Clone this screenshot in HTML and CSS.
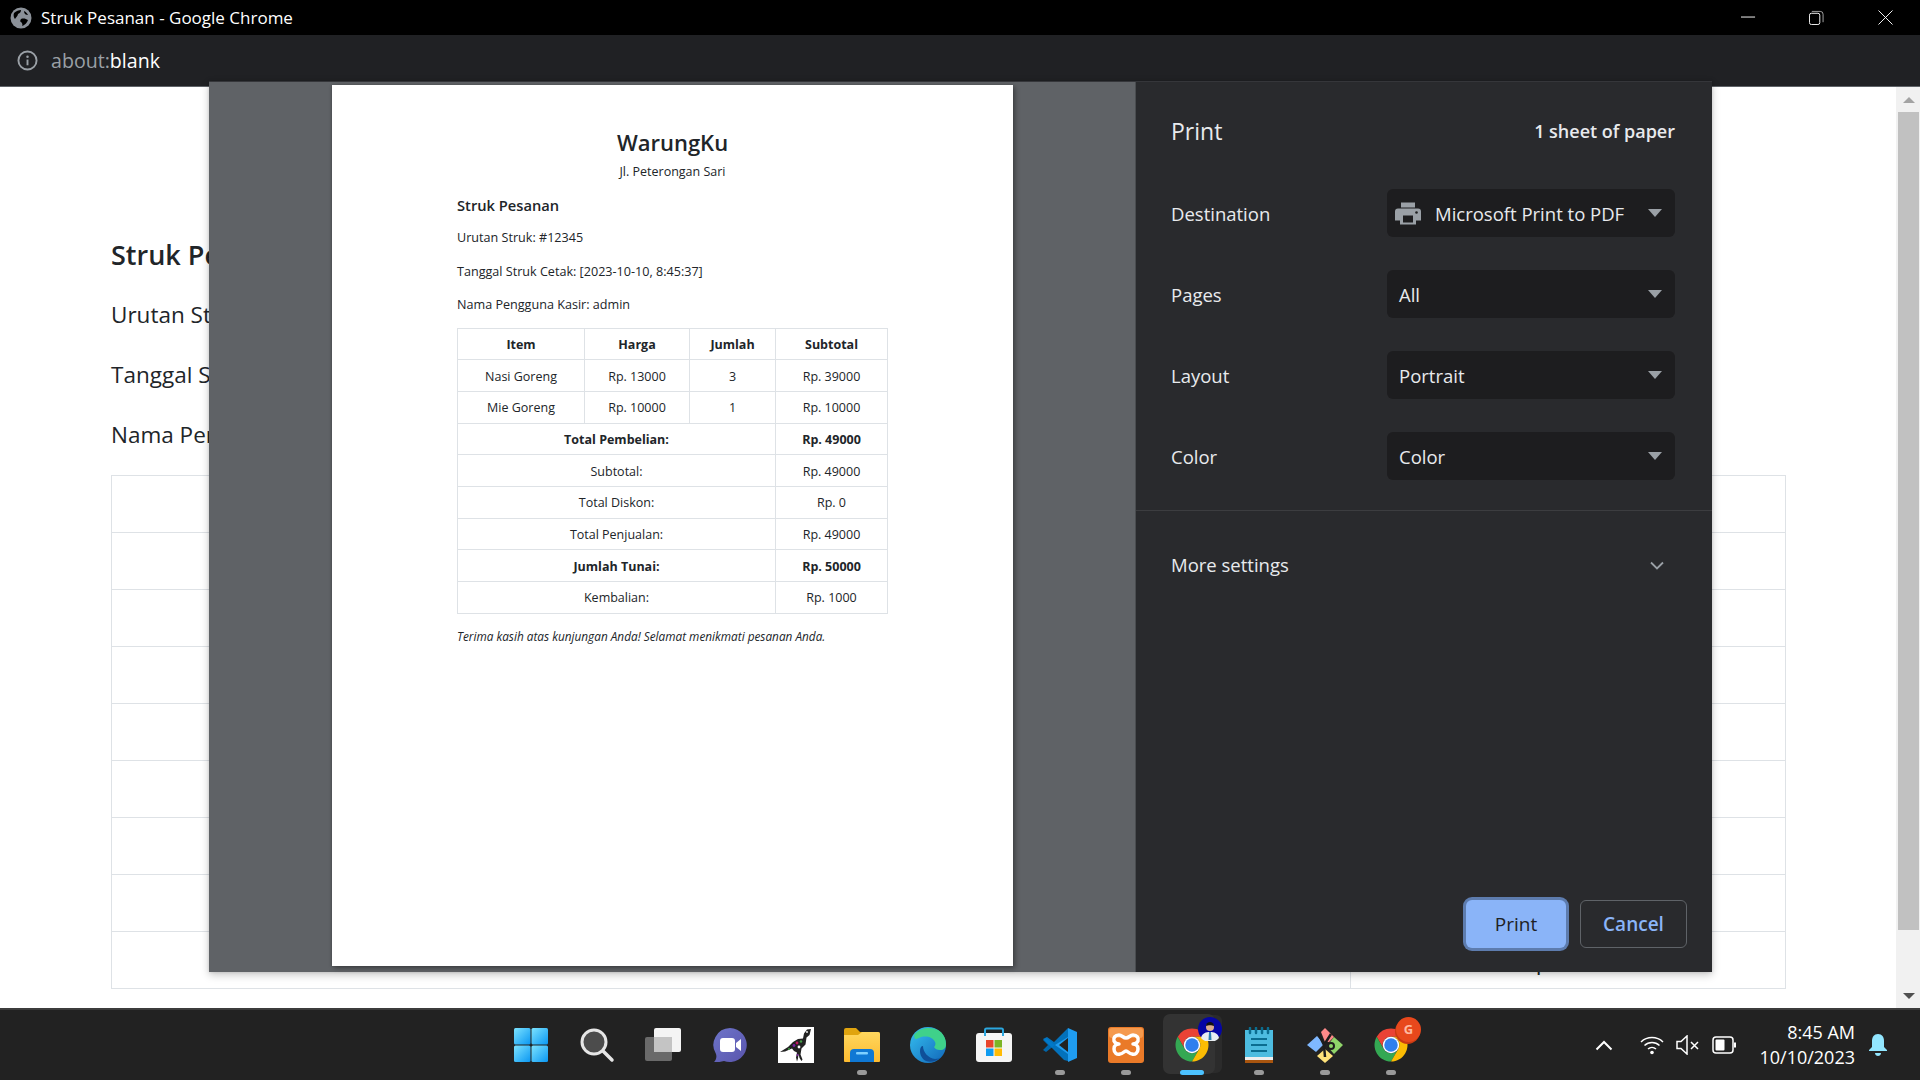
FILE: index.html
```html
<!DOCTYPE html>
<html lang="id">
<head>
<meta charset="utf-8">
<title>Struk Pesanan - Google Chrome</title>
<link rel="stylesheet" href="styles.css">
</head>
<body>
<svg class="defs" width="0" height="0" aria-hidden="true">
  <defs>
    <symbol id="chrome" viewBox="0 0 48 48">
      <path fill="#ea4335" d="M24 2A22 22 0 0 1 43.05 13H24a11 11 0 0 0-9.53 16.5L4.95 13A22 22 0 0 1 24 2z"/>
      <path fill="#34a853" d="M4.95 13A22 22 0 0 0 24 46l9.53-16.5a11 11 0 0 1-19.06 0z"/>
      <path fill="#fbbc04" d="M43.05 13H24a11 11 0 0 1 9.53 16.5L24 46A22 22 0 0 0 43.05 13z"/>
      <circle cx="24" cy="24" r="11" fill="#fff"/>
      <circle cx="24" cy="24" r="9" fill="#2f7fee"/>
    </symbol>
    <linearGradient id="win" x1="0" y1="0" x2="1" y2="1">
      <stop offset="0" stop-color="#7ce3ff"/><stop offset="1" stop-color="#0a97f2"/>
    </linearGradient>
    <linearGradient id="meet" x1="0" y1="0" x2="1" y2="1">
      <stop offset="0" stop-color="#6d74c9"/><stop offset="1" stop-color="#5a55ad"/>
    </linearGradient>
    <linearGradient id="edge" x1="0" y1="0" x2="1" y2="1">
      <stop offset="0" stop-color="#35c1f1"/><stop offset="1" stop-color="#1166b8"/>
    </linearGradient>
    <linearGradient id="folder" x1="0" y1="0" x2="0" y2="1">
      <stop offset="0" stop-color="#ffd75e"/><stop offset="1" stop-color="#fdbb30"/>
    </linearGradient>
  </defs>
</svg>

<div class="window">
  <header class="titlebar">
    <svg class="globe" viewBox="0 0 22 22">
      <circle cx="11" cy="11" r="10.5" fill="#8b9199"/>
      <path fill="#000" d="M4 6c2-2 5-3 7-3 0 2-1 3-3 4 0 2-2 3-3 5-1-1-2-4-1-6zM11 12c3-1 5 0 7 1-1 3-3 5-6 6 1-2 0-3-1-4-1 0-1-2 0-3zM14 4c2 1 3 2 4 4-2 0-4-1-4-4z"/>
    </svg>
    <span class="title-text">Struk Pesanan - Google Chrome</span>
    <div class="winbtns">
      <svg class="winbtn" viewBox="0 0 16 16"><path d="M0 7.5h15" stroke="#fff" fill="none"/></svg>
      <svg class="winbtn" viewBox="0 0 16 16"><rect x=".5" y="3.5" width="11" height="12" rx="2" stroke="#fff" fill="none"/><path d="M3 1.5h9a3 3 0 0 1 3 3V13" stroke="#aaa" fill="none"/></svg>
      <svg class="winbtn" viewBox="0 0 16 16"><path d="M.5.5l15 15M15.500.5l-15 15" stroke="#fff" fill="none"/></svg>
    </div>
  </header>

  <div class="addressbar">
    <svg class="info" viewBox="0 0 22 22">
      <circle cx="11" cy="11" r="9.500" fill="none" stroke="#9aa0a6" stroke-width="2"/>
      <path d="M11 10v6" stroke="#9aa0a6" stroke-width="2"/><circle cx="11" cy="7" r="1.300" fill="#9aa0a6"/>
    </svg>
    <span class="url"><span class="url-dim">about:</span>blank</span>
  </div>

  <div class="content">
    <main class="page">
      <h2 class="bg-title">Struk Pesanan</h2>
      <p class="bg-line">Urutan Struk: #12345</p>
      <p class="bg-line">Tanggal Struk Cetak: [2023-10-10, 8:45:37]</p>
      <p class="bg-line">Nama Pengguna Kasir: admin</p>
      <table class="bg-table">
        <colgroup><col class="b1"><col class="b2"></colgroup>
        <tr><td></td><td></td></tr>
        <tr><td></td><td></td></tr>
        <tr><td></td><td></td></tr>
        <tr><td></td><td></td></tr>
        <tr><td></td><td></td></tr>
        <tr><td></td><td></td></tr>
        <tr><td></td><td></td></tr>
        <tr><td></td><td></td></tr>
        <tr><td></td><td>Rp. 1000</td></tr>
      </table>
    </main>
    <div class="scrollbar">
      <div class="sb-btn"><span class="sb-up"></span></div>
      <div class="sb-track"><div class="sb-thumb"></div></div>
      <div class="sb-btn"><span class="sb-down"></span></div>
    </div>
  </div>

  <footer class="taskbar">
    <div></div>
    <div class="tb-icons">
      <div class="tb-item">
        <svg class="tb-icon" viewBox="0 0 36 36"><g fill="url(#win)"><rect x="1" y="1" width="16.500" height="16.500" rx="1.500"/><rect x="18.500" y="1" width="16.500" height="16.500" rx="1.500"/><rect x="1" y="18.500" width="16.500" height="16.500" rx="1.500"/><rect x="18.500" y="18.500" width="16.500" height="16.500" rx="1.500"/></g></svg>
      </div>
      <div class="tb-item">
        <svg class="tb-icon" viewBox="0 0 36 36"><circle cx="15" cy="15" r="12" fill="#4c4c4c" stroke="#e6e6e6" stroke-width="3"/><path d="M24 24l9 9" stroke="#e6e6e6" stroke-width="3.500" stroke-linecap="round"/></svg>
      </div>
      <div class="tb-item">
        <svg class="tb-icon" viewBox="0 0 36 36"><rect x="9" y="1" width="27" height="24" rx="2" fill="#f4f4f4"/><rect x="0" y="10" width="27" height="24" rx="2" fill="#777" fill-opacity=".85"/><rect x="9" y="10" width="18" height="15" fill="#c4c4c4"/></svg>
      </div>
      <div class="tb-item">
        <svg class="tb-icon" viewBox="0 0 36 36"><path fill="url(#meet)" d="M18 1a17 17 0 1 1-6 33c-3 1-6 1-10 1 2-2 3-5 2-8A17 17 0 0 1 18 1z"/><rect x="8" y="11" width="15" height="14" rx="3" fill="#fff"/><path fill="#fff" d="M24 16l5-4v12l-5-4z"/></svg>
      </div>
      <div class="tb-item">
        <svg class="tb-icon" viewBox="0 0 36 36">
          <rect width="36" height="36" fill="#fff"/>
          <path fill="#222" d="M33 2l-4 .5-3 4-1 5-5 .5-5 3-5 5-8 5 5-.5 7-3 2 2.500 3 1.500-1 5 1 4 1-3 .5-4.500 1 4 2 3 1-1.500-2-5 1-6 4-4 1-7 3-2.500z"/>
          <g><circle cx="19" cy="16" r="1.400" fill="#c2185b"/><circle cx="23" cy="14.500" r="1.200" fill="#43a047"/><circle cx="16" cy="18.500" r="1.400" fill="#7b1fa2"/><circle cx="21" cy="20" r="1.400" fill="#fff"/><circle cx="11" cy="22" r="1" fill="#43a047"/><circle cx="19.500" cy="28" r="1" fill="#7b1fa2"/><circle cx="29" cy="5" r=".9" fill="#fff"/></g>
        </svg>
      </div>
      <div class="tb-item has-dot">
        <svg class="tb-icon" viewBox="0 0 36 36"><path fill="#e0a40f" d="M0 3a2 2 0 0 1 2-2h10l4 4h18a2 2 0 0 1 2 2v4H0z"/><path fill="url(#folder)" d="M0 8h14l4-3h16a2 2 0 0 1 2 2v27a1 1 0 0 1-1 1H1a1 1 0 0 1-1-1z"/><path fill="#0f78d4" d="M6 26a4 4 0 0 1 4-4h16a4 4 0 0 1 4 4v9H6z"/><rect x="12" y="25" width="12" height="2.500" rx="1" fill="#7fd0ff"/></svg>
      </div>
      <div class="tb-item">
        <svg class="tb-icon" viewBox="0 0 36 36"><circle cx="18" cy="18" r="18" fill="url(#edge)"/><path fill="#3fd18a" d="M4 8C9 1 20-1 28 3c5 3 8 8 8 14 0 4-2 6-6 6-3 0-5-1-6-3 1-1 2-3 1-5-2-5-10-7-16-4-3 1-4 3-5-3z"/><path fill="#0f4f98" d="M13 19c0 6 5 12 12 13 3 0 5-1 6-2-4 4-10 6-15 4-4-2-6-6-6-10 0-3 1-5 3-5z"/></svg>
      </div>
      <div class="tb-item">
        <svg class="tb-icon" viewBox="0 0 36 36"><rect x="0" y="6" width="36" height="29" rx="3" fill="#f5f5f5"/><path d="M9 9V3a1.500 1.500 0 0 1 1.500-1.500h15A1.500 1.500 0 0 1 27 3v6" fill="none" stroke="#2ba7e0" stroke-width="2"/><rect x="10" y="13" width="7.500" height="7.500" fill="#e8452c"/><rect x="18.500" y="13" width="7.500" height="7.500" fill="#7cb526"/><rect x="10" y="21.500" width="7.500" height="7.500" fill="#0f9bf0"/><rect x="18.500" y="21.500" width="7.500" height="7.500" fill="#ffbb05"/></svg>
      </div>
      <div class="tb-item has-dot">
        <svg class="tb-icon" viewBox="0 0 36 36"><path fill="#0065a9" d="M1 13l3-2 9 7-9 7-3-2 5-5z"/><path fill="#007acc" d="M26 1l-14 14-7-5-4 2 21 21 4 1z" opacity=".9"/><path fill="#1f9cf0" d="M26 1l9 4v26l-9 4 0-10V10zM26 10L13 18l13 9z"/><path fill="#222" d="M26 11v14l-9-7z"/></svg>
      </div>
      <div class="tb-item has-dot">
        <svg class="tb-icon" viewBox="0 0 36 36"><rect width="36" height="36" rx="3" fill="#ea7a28"/><rect x="1" y="1" width="34" height="10" rx="3" fill="#f59a4e"/><path fill="none" stroke="#fff" stroke-width="3.500" stroke-linejoin="round" d="M11 8c-4 0-6 3-5 6 1 2 3 3 5 3-2 0-5 1-5 5s3 6 6 5c3 0 4-3 6-3s3 3 6 3c3 1 6-1 6-5s-3-5-5-5c2 0 4-1 5-3 1-3-1-6-5-6-3 0-4 3-7 3s-4-3-7-3z"/></svg>
      </div>
      <div class="tb-item is-active">
        <svg class="tb-icon" viewBox="0 0 36 36"><use href="#chrome"/></svg>
        <svg class="avatar" viewBox="0 0 24 24">
          <circle cx="12" cy="12" r="12" fill="#0505a5"/>
          <path fill="#e8eef2" d="M3 21c1-5 5-6 9-6s8 1 9 6a12 12 0 0 1-18 0z"/>
          <path fill="#2c7fb0" d="M11 15h2l.5 8h-3z"/>
          <circle cx="12" cy="10" r="4" fill="#dcae90"/>
          <path fill="#111" d="M8 9c0-3 2-4 4-4s4 1 4 4c-2-1-6-1-8 0z"/>
        </svg>
      </div>
      <div class="tb-item has-dot">
        <svg class="tb-icon" viewBox="0 0 36 36"><rect x="4" y="3" width="28" height="28" fill="#4dbce0"/><path d="M4 30h28v3H4z" fill="#eee"/><path d="M4 33h28v3H4z" fill="#a8550f"/><path d="M9 1v5M15 1v5M21 1v5M27 1v5" stroke="#0b6d90" stroke-width="2.500" stroke-linecap="round"/><path d="M10 12h16M10 18h16M10 24h16" stroke="#0b6d90" stroke-width="2"/></svg>
      </div>
      <div class="tb-item has-dot">
        <svg class="tb-icon" viewBox="0 0 36 36"><path fill="#ff8a8a" d="M14 5l4-4 9 9-5 5-4 0z"/><path fill="#7fb8ff" d="M10 9l7 8-8 8-9-7z"/><path fill="#8fd46a" d="M27 10l9 8-9 9-7-8z"/><path fill="#ffe27a" d="M18 22l8 7-8 7-8-7z"/><path d="M11 6l6 12 1 12M24 7l-7 11" stroke="#1d1d1d" stroke-width="2.500" fill="none"/><circle cx="24" cy="19" r="3" fill="none" stroke="#1d1d1d" stroke-width="2"/></svg>
      </div>
      <div class="tb-item has-dot">
        <svg class="tb-icon" viewBox="0 0 36 36"><use href="#chrome"/></svg>
        <span class="badge">G</span>
      </div>
    </div>
    <div class="tray">
      <svg class="tray-chev" viewBox="0 0 18 11"><path d="M1.500 9.500L9 2l7.500 7.500" fill="none" stroke="#fff" stroke-width="2"/></svg>
      <svg class="tray-wifi" viewBox="0 0 24 20"><g fill="none" stroke="#fff" stroke-width="1.500"><path d="M1 7a16 16 0 0 1 22 0"/><path d="M4.500 10.500a11 11 0 0 1 15 0"/><path d="M8 14a6 6 0 0 1 8 0"/></g><circle cx="12" cy="17.500" r="1.800" fill="#fff"/></svg>
      <svg class="tray-vol" viewBox="0 0 24 20"><path d="M1 6.500h4L11 1v18l-6-5.500H1z" fill="none" stroke="#fff" stroke-width="1.500"/><path d="M15 7l7 7M22 7l-7 7" stroke="#fff" stroke-width="1.500"/></svg>
      <svg class="tray-bat" viewBox="0 0 24 18"><rect x="1" y="1" width="20" height="16" rx="3" fill="none" stroke="#fff" stroke-width="1.500"/><rect x="3.500" y="3.500" width="9" height="11" rx="1" fill="#fff"/><rect x="22" y="6.500" width="2" height="5" fill="#fff"/></svg>
      <div class="clock"><div>8:45 AM</div><div>10/10/2023</div></div>
      <svg class="tray-bell" viewBox="0 0 20 24"><path fill="#92e6ff" d="M10 1c4 0 6 3 6 7v6l3 3v1H1v-1l3-3V8c0-4 2-7 6-7z"/><path fill="#92e6ff" d="M7 20h6c0 2-1.500 3-3 3s-3-1-3-3z"/></svg>
    </div>
  </footer>

  <section class="dialog">
    <div class="preview">
      <article class="sheet">
        <h1 class="shop">WarungKu</h1>
        <p class="addr">Jl. Peterongan Sari</p>
        <h2 class="sheet-h">Struk Pesanan</h2>
        <p class="meta meta-1">Urutan Struk: #12345</p>
        <p class="meta meta-2">Tanggal Struk Cetak: [2023-10-10, 8:45:37]</p>
        <p class="meta meta-3">Nama Pengguna Kasir: admin</p>
        <table class="receipt">
          <colgroup><col class="c1"><col class="c2"><col class="c3"><col class="c4"></colgroup>
          <tr><th>Item</th><th>Harga</th><th>Jumlah</th><th>Subtotal</th></tr>
          <tr><td>Nasi Goreng</td><td>Rp. 13000</td><td>3</td><td>Rp. 39000</td></tr>
          <tr><td>Mie Goreng</td><td>Rp. 10000</td><td>1</td><td>Rp. 10000</td></tr>
          <tr><th colspan="3">Total Pembelian:</th><th>Rp. 49000</th></tr>
          <tr><td colspan="3">Subtotal:</td><td>Rp. 49000</td></tr>
          <tr><td colspan="3">Total Diskon:</td><td>Rp. 0</td></tr>
          <tr><td colspan="3">Total Penjualan:</td><td>Rp. 49000</td></tr>
          <tr><th colspan="3">Jumlah Tunai:</th><th>Rp. 50000</th></tr>
          <tr><td colspan="3">Kembalian:</td><td>Rp. 1000</td></tr>
        </table>
        <p class="thanks">Terima kasih atas kunjungan Anda! Selamat menikmati pesanan Anda.</p>
      </article>
    </div>
    <aside class="panel">
      <div class="panel-head"><span class="panel-title">Print</span><span class="sheets">1 sheet of paper</span></div>
      <div class="settings">
        <div class="row"><span class="label">Destination</span>
          <div class="select select-dest">
            <svg class="printer" viewBox="0 0 26 22"><path fill="#9aa0a6" d="M6 0h14v5H6zM3 6h20a3 3 0 0 1 3 3v9h-5v4H5v-4H0V9a3 3 0 0 1 3-3z"/><rect x="8" y="13" width="10" height="7" fill="#1d1d1f"/><circle cx="21.500" cy="10" r="1.300" fill="#1d1d1f"/></svg>
            <span class="select-text">Microsoft Print to PDF</span><span class="caret"></span>
          </div>
        </div>
        <div class="row"><span class="label">Pages</span><div class="select"><span class="select-text">All</span><span class="caret"></span></div></div>
        <div class="row"><span class="label">Layout</span><div class="select"><span class="select-text">Portrait</span><span class="caret"></span></div></div>
        <div class="row"><span class="label">Color</span><div class="select"><span class="select-text">Color</span><span class="caret"></span></div></div>
      </div>
      <div class="more"><span class="label">More settings</span>
        <svg class="chev" viewBox="0 0 14 9"><path d="M1 1.500l6 6 6-6" fill="none" stroke="#9aa0a6" stroke-width="1.800"/></svg>
      </div>
      <div class="actions"><button class="btn btn-print">Print</button><button class="btn btn-cancel">Cancel</button></div>
    </aside>
  </section>
</div>
</body>
</html>
```

FILE: styles.css
```css
* { box-sizing: border-box; }
html, body { margin: 0; padding: 0; height: 100%; overflow: hidden; background: #fff; }
body { font-family: "Open Sans", "Noto Sans", sans-serif; color: #212529; }
.defs { position: absolute; }

.window { position: relative; display: flex; flex-direction: column; width: 1920px; height: 1080px; }

/* Title bar */
.titlebar { flex: 0 0 35px; display: flex; align-items: center; background: #000; color: #fff; padding-left: 10px; }
.globe { width: 22px; height: 22px; margin-right: 9px; }
.title-text { font-size: 17px; }
.winbtns { margin-left: auto; display: flex; align-items: center; }
.winbtn { width: 15px; height: 15px; margin-right: 54px; }
.winbtn:nth-child(1) { margin-right: 53px; }
.winbtn:nth-child(3) { margin-right: 27px; }

/* Address bar */
.addressbar { flex: 0 0 52px; display: flex; align-items: center; background: #202124; border-bottom: 1px solid #5f6368; padding-left: 17px; }
.info { width: 21px; height: 21px; margin-right: 13px; }
.url { font-size: 19.600px; color: #fff; }
.url-dim { color: #9aa0a6; }

/* Page behind the dialog */
.content { flex: 1; display: flex; min-height: 0; }
.page { flex: 1; padding: 146px 110px 0 111px; }
.bg-title { margin: 0 0 20px; font-size: 27px; line-height: 44px; font-weight: 600; }
.bg-line { margin: 0 0 24px; font-size: 22.500px; line-height: 36px; }
.bg-line:nth-of-type(3) { margin-bottom: 22px; }
.bg-table { width: 100%; height: 514px; border-collapse: collapse; font-size: 23px; table-layout: fixed; }
.bg-table .b1 { width: 1239px; }
.bg-table .b2 { width: 435px; }
.bg-table td { border: 1px solid #dee2e6; text-align: center; padding: 0; height: 57px; }

.scrollbar { flex: 0 0 25px; display: flex; flex-direction: column; background: #f1f1f1; }
.sb-btn { flex: 0 0 25px; display: flex; align-items: center; justify-content: center; }
.sb-up { width: 0; height: 0; border: 6px solid transparent; border-top: 0; border-bottom: 6px solid #a3a3a3; }
.sb-down { width: 0; height: 0; border: 6px solid transparent; border-bottom: 0; border-top: 6px solid #505050; }
.sb-track { flex: 1; padding-left: 2px; padding-right: 2px; }
.sb-thumb { height: 818px; background: #c1c1c1; }

/* Taskbar */
.taskbar { flex: 0 0 72px; display: grid; grid-template-columns: 1fr auto 1fr; align-items: center; background: #222; border-top: 2px solid #3c3c3c; }
.tb-icons { display: flex; margin-left: 2px; }
.tb-item { position: relative; width: 66.150px; height: 70px; display: flex; align-items: center; justify-content: center; }
.tb-icon { position: relative; width: 36px; height: 36px; }
.tb-item.has-dot::after { content: ""; position: absolute; left: 28px; bottom: 5px; width: 10px; height: 5px; border-radius: 3px; background: #9a9a9a; }
.is-active::before { content: ""; position: absolute; left: 4px; top: 4px; width: 52px; height: 60px; border-radius: 7px; background: #333; box-shadow: 8px 0 0 -1px #2b2b2b; }
.is-active::after { content: ""; position: absolute; left: 21px; bottom: 5px; width: 24px; height: 5px; border-radius: 3px; background: #4cc2ff; }
.avatar { position: absolute; left: 39px; top: 7px; width: 24px; height: 24px; }
.badge { position: absolute; left: 38px; top: 7px; width: 25px; height: 25px; border-radius: 50%; background: #e8481c; box-shadow: -1px 2px 0 #c93a12; color: #ffb9a0; font-size: 13px; font-weight: 700; line-height: 25px; text-align: center; }

.tray { display: flex; align-items: center; justify-content: flex-end; padding-right: 32px; color: #fff; }
.tray-chev { width: 18px; height: 11px; margin-right: 27px; }
.tray-wifi { width: 24px; height: 20px; margin-right: 12px; }
.tray-vol { width: 24px; height: 20px; margin-right: 12px; }
.tray-bat { width: 24px; height: 18px; }
.clock { margin-left: 23px; margin-right: 13px; text-align: right; font-size: 18px; line-height: 25px; }
.tray-bell { width: 20px; height: 24px; }

/* Print dialog */
.dialog { position: absolute; left: 209px; top: 81px; width: 1503px; height: 891px; display: flex; border-top: 1px solid #35363a; box-shadow: 0 3px 8px rgba(0,0,0,.22), 0 0 3px rgba(0,0,0,.12); }
.preview { flex: 0 0 925px; background: #5f6266; padding: 3px 122px 6px 123px; }
.sheet { height: 100%; background: #fff; padding: 42px 125px 0; box-shadow: 2px 2px 5px rgba(0,0,0,.38), -1px 0 2px rgba(0,0,0,.12); }
.shop { margin: 0; font-size: 22px; line-height: 30px; font-weight: 600; text-align: center; }
.addr { margin: 0; font-size: 12.500px; line-height: 20px; text-align: center; padding-top: 5px; }
.sheet-h { margin: 12px 0 0; font-size: 14.700px; line-height: 22px; font-weight: 600; }
.meta { margin: 0; font-size: 12.600px; line-height: 18px; }
.meta-1 { margin-top: 13px; }
.meta-2 { margin-top: 16px; }
.meta-3 { margin-top: 14.500px; margin-bottom: 14px; }
.receipt { width: 430px; border-collapse: collapse; table-layout: fixed; font-size: 12.500px; line-height: 17px; }
.receipt .c1 { width: 127px; }
.receipt .c2 { width: 105px; }
.receipt .c3 { width: 86px; }
.receipt .c4 { width: 112px; }
.receipt th, .receipt td { border: 1px solid #dee2e6; text-align: center; padding: 1px 0 0; height: 31.700px; }
.receipt th { font-weight: 700; }
.thanks { margin: 13px 0 0; font-size: 11.800px; line-height: 18px; font-style: italic; white-space: nowrap; }

.panel { flex: 1; display: flex; flex-direction: column; background: #292a2d; color: #e8eaed; border-left: 1px solid #4a4d50; }
.panel-head { flex: 0 0 107px; display: flex; justify-content: space-between; align-items: center; padding: 0 37px 10px 35px; }
.panel-title { font-size: 23px; }
.sheets { font-size: 18px; font-weight: 600; }
.settings { flex: 0 0 321px; border-bottom: 1px solid #3c3d40; }
.row { height: 81px; display: flex; align-items: flex-start; justify-content: space-between; padding: 0 37px 0 35px; }
.row:last-child { height: 78px; }
.label { font-size: 18.500px; line-height: 50px; }
.select { width: 288px; height: 48px; display: flex; align-items: center; background: #1d1d1f; border-radius: 6px; padding: 0 12px; color: #e8eaed; }
.select-text { font-size: 18.500px; }
.select-dest { padding-left: 8px; }
.printer { width: 26px; height: 23px; margin-right: 14px; }
.caret { margin-left: auto; margin-right: 1px; width: 0; height: 0; border: 7px solid transparent; border-bottom: 0; border-top: 8px solid #9aa0a6; }
.more { flex: 0 0 108px; display: flex; align-items: center; justify-content: space-between; padding: 0 48px 0 35px; }
.chev { width: 14px; height: 9px; }
.actions { flex: 1; display: flex; justify-content: flex-end; align-items: flex-end; gap: 14px; padding: 0 25px 24px 0; }
.btn { font-family: inherit; font-size: 19px; height: 48px; border-radius: 6px; cursor: pointer; }
.btn-print { width: 100px; border: 0; background: #8ab4f8; color: #202124; box-shadow: 0 0 0 3px #5d7cae; }
.btn-cancel { width: 107px; background: transparent; border: 1px solid #5f6368; color: #8ab4f8; font-weight: 600; }
```
